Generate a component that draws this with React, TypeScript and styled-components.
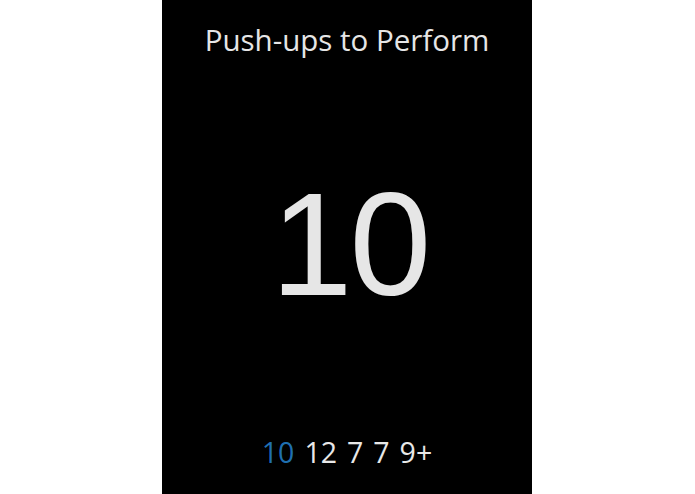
import React from "react";
import styled, { createGlobalStyle } from "styled-components";

const Global = createGlobalStyle`
  html, body { margin: 0; padding: 0; background: #fff; }
  body { width: 695px; height: 494px; overflow: hidden; }
`;

const Page = styled.div`
  width: 695px;
  height: 494px;
  display: flex;
  padding-left: 162px;
  box-sizing: border-box;
`;

const Screen = styled.div`
  width: 370px;
  height: 494px;
  background: #000;
  display: flex;
  flex-direction: column;
  align-items: center;
`;

const Title = styled.div`
  margin-top: 20px;
  font-family: "Open Sans", sans-serif;
  font-size: 29.5px;
  line-height: 40px;
  color: #e6e6e6;
`;

const Count = styled.div`
  margin-top: 99px;
  padding-left: 5px;
  font-family: "Liberation Sans", Arial, sans-serif;
  font-size: 147px;
  line-height: 170px;
  letter-spacing: -3px;
  color: #e6e6e6;
`;

const Strip = styled.div`
  margin-top: auto;
  margin-bottom: 22px;
  display: flex;
  gap: 10px;
  font-family: "Open Sans", sans-serif;
  font-size: 28.5px;
  line-height: 40px;
`;

const Item = styled.span<{ $active?: boolean }>`
  color: ${(p) => (p.$active ? "#1f6fb0" : "#e8e8e8")};
`;

const values = ["10", "12", "7", "7", "9+"];

export default function App() {
  return (
    <>
      <Global />
      <Page>
        <Screen>
          <Title>Push-ups to Perform</Title>
          <Count>10</Count>
          <Strip>
            {values.map((v, i) => (
              <Item key={i} $active={i === 0}>
                {v}
              </Item>
            ))}
          </Strip>
        </Screen>
      </Page>
    </>
  );
}
